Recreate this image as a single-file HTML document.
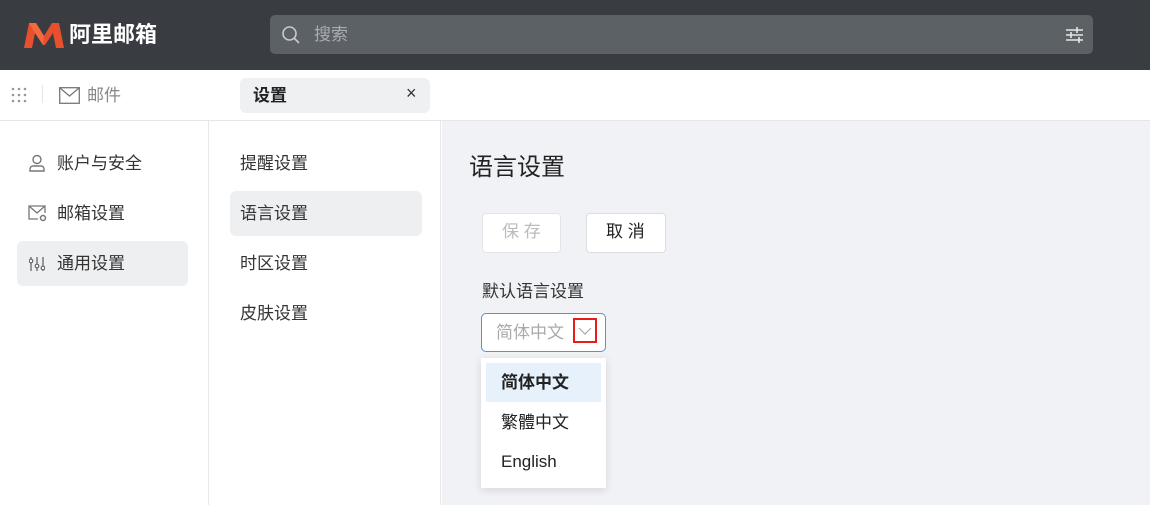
<!DOCTYPE html>
<html><head><meta charset="utf-8"><style>
*{margin:0;padding:0;box-sizing:border-box}
body{width:1150px;height:505px;overflow:hidden;font-family:"Liberation Sans","Noto Sans CJK SC",sans-serif;background:#fff;position:relative;color:#222}
.top{position:absolute;left:0;top:0;width:1150px;height:70px;background:#393d42}
.search{position:absolute;left:270px;top:15px;width:823px;height:39px;background:#5c6166;border-radius:5px}
.abs{position:absolute}
.bar2{position:absolute;top:70px;left:0;width:1150px;height:51px;background:#fff;border-bottom:1px solid #e6e6ea}
.left{position:absolute;top:121px;left:0;width:209px;height:384px;background:#fff;border-right:1px solid #e8e8ea}
.mid{position:absolute;top:121px;left:210px;width:231px;height:384px;background:#fff;border-right:1px solid #e8e8ea}
.main{position:absolute;top:121px;left:442px;width:708px;height:384px;background:#f1f2f5}
.t{position:absolute;font-size:17px;color:#333;white-space:nowrap;margin-top:-3px}
</style></head><body>
<div class="top"></div>
<svg class="abs" style="left:22px;top:20px" width="44" height="30" viewBox="0 0 44 30"><path d="M2 28 L7 3 L14 3 L22 16 L30 3 L37 3 L42 28 L34 28 L31 13 L23 25 L21 25 L13 13 L10 28 Z" fill="#e8502d"/><path d="M7 3 L14 3 L22 16 L21 25 L13 13 Z" fill="#f26a3d"/></svg>
<div class="t" style="left:69px;top:20px;font-size:22px;color:#fff;font-weight:bold">阿里邮箱</div>
<div class="search"></div>
<svg class="abs" style="left:281px;top:25px" width="20" height="20" viewBox="0 0 20 20"><circle cx="8.5" cy="8.5" r="6.5" fill="none" stroke="#c8cacc" stroke-width="1.6"/><path d="M13 13l5 5" stroke="#c8cacc" stroke-width="1.6"/></svg>
<div class="t" style="left:314px;top:23px;color:#a9adb1;font-size:17px">搜索</div>
<svg class="abs" style="left:1065px;top:26px" width="20" height="18" viewBox="0 0 20 18"><path d="M1 4h17M1 9h17M1 14h17" stroke="#e6e6e6" stroke-width="1.4"/><path d="M12 1v6M6 6v6M14 11v6" stroke="#e6e6e6" stroke-width="1.6"/></svg>
<div class="bar2"></div>
<svg class="abs" style="left:11px;top:87px" width="17" height="17" viewBox="0 0 17 17" fill="#999"><circle cx="2" cy="2" r="1.3"/><circle cx="8" cy="2" r="1.3"/><circle cx="14" cy="2" r="1.3"/><circle cx="2" cy="8" r="1.3"/><circle cx="8" cy="8" r="1.3"/><circle cx="14" cy="8" r="1.3"/><circle cx="2" cy="14" r="1.3"/><circle cx="8" cy="14" r="1.3"/><circle cx="14" cy="14" r="1.3"/></svg>
<div class="abs" style="left:42px;top:85px;width:1px;height:18px;background:#e5e5e5"></div>
<svg class="abs" style="left:59px;top:87px" width="21" height="17" viewBox="0 0 21 17"><rect x="0.7" y="0.7" width="19.6" height="15.6" fill="none" stroke="#777" stroke-width="1.3"/><path d="M1 1l9.5 8L20 1" fill="none" stroke="#777" stroke-width="1.3"/></svg>
<div class="t" style="left:87px;top:84px;color:#888;font-size:17px">邮件</div>
<div class="abs" style="left:240px;top:78px;width:190px;height:35px;background:#eef0f2;border-radius:6px"></div>
<div class="t" style="left:253px;top:84px;font-weight:bold;color:#222">设置</div>
<div class="t" style="left:406px;top:86px;font-size:18px;color:#333">×</div>
<div class="left"></div>
<div class="abs" style="left:17px;top:241px;width:171px;height:45px;background:#eeeff1;border-radius:6px"></div>
<svg class="abs" style="left:28px;top:154px" width="18" height="18" viewBox="0 0 18 18"><circle cx="9" cy="5.5" r="4" fill="none" stroke="#777" stroke-width="1.4"/><path d="M2 17v-2a3 3 0 0 1 3-3h8a3 3 0 0 1 3 3v2z" fill="none" stroke="#777" stroke-width="1.4"/></svg>
<div class="t" style="left:57px;top:152px">账户与安全</div>
<svg class="abs" style="left:28px;top:205px" width="19" height="17" viewBox="0 0 19 17"><path d="M10 14H1V1h16v7" fill="none" stroke="#777" stroke-width="1.3"/><path d="M1 1l8 7 8-7" fill="none" stroke="#777" stroke-width="1.3"/><circle cx="15" cy="13" r="2.5" fill="none" stroke="#777" stroke-width="1.5"/></svg>
<div class="t" style="left:57px;top:202px">邮箱设置</div>
<svg class="abs" style="left:29px;top:256px" width="16" height="16" viewBox="0 0 16 16"><path d="M2 1v14M8 1v14M14 1v14" stroke="#666" stroke-width="1.3"/><circle cx="2" cy="5" r="1.8" fill="#fff" stroke="#666" stroke-width="1.2"/><circle cx="8" cy="10" r="1.8" fill="#fff" stroke="#666" stroke-width="1.2"/><circle cx="14" cy="12" r="1.8" fill="#fff" stroke="#666" stroke-width="1.2"/></svg>
<div class="t" style="left:57px;top:252px">通用设置</div>
<div class="mid"></div>
<div class="abs" style="left:230px;top:191px;width:192px;height:45px;background:#eeeff1;border-radius:6px"></div>
<div class="t" style="left:240px;top:152px">提醒设置</div>
<div class="t" style="left:240px;top:202px">语言设置</div>
<div class="t" style="left:240px;top:252px">时区设置</div>
<div class="t" style="left:240px;top:302px">皮肤设置</div>
<div class="main"></div>
<div class="t" style="left:469px;top:150px;font-size:24px;color:#222">语言设置</div>
<div class="abs" style="left:482px;top:213px;width:79px;height:40px;background:#fff;border:1px solid #e3e4e7;border-radius:4px"></div>
<div class="t" style="left:502px;top:220px;color:#bbb">保 存</div>
<div class="abs" style="left:586px;top:213px;width:80px;height:40px;background:#fff;border:1px solid #dcdde0;border-radius:4px"></div>
<div class="t" style="left:606px;top:220px;color:#222">取 消</div>
<div class="t" style="left:482px;top:280px;color:#333">默认语言设置</div>
<div class="abs" style="left:481px;top:313px;width:125px;height:39px;background:#fff;border:1px solid #5b8fd8;border-radius:5px"></div>
<div class="t" style="left:496px;top:321px;color:#aaa">简体中文</div>
<div class="abs" style="left:573px;top:318px;width:24px;height:25px;border:2px solid #e81c1c"></div>
<svg class="abs" style="left:577px;top:326px" width="16" height="10" viewBox="0 0 16 10"><path d="M2 2l6 6 6-6" fill="none" stroke="#aaa" stroke-width="1.2"/></svg>
<div class="abs" style="left:481px;top:358px;width:125px;height:130px;background:#fff;box-shadow:0 2px 8px rgba(0,0,0,0.12)"></div>
<div class="abs" style="left:486px;top:363px;width:115px;height:39px;background:#e6f1fc"></div>
<div class="t" style="left:501px;top:371px;font-weight:bold;color:#222">简体中文</div>
<div class="t" style="left:501px;top:411px;color:#222">繁體中文</div>
<div class="t" style="left:501px;top:451px;color:#222;margin-top:1px">English</div>
</body></html>
